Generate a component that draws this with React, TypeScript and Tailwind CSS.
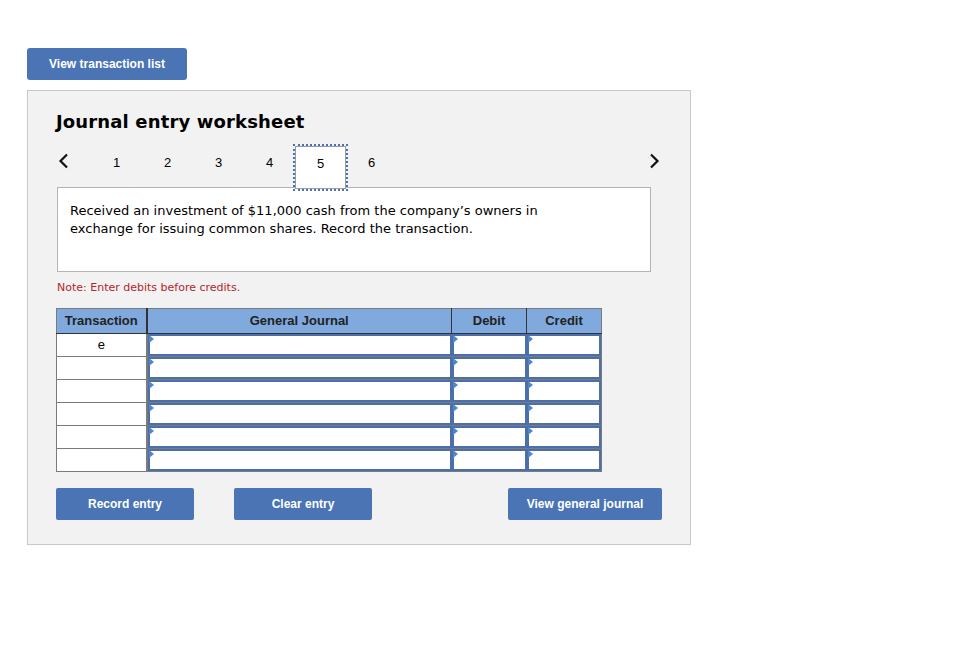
import { useState } from "react";

const rows = ["e", "", "", "", "", ""];
const pages = [1, 2, 3, 4, 5, 6];

function Chevron({ dir }: { dir: "left" | "right" }) {
  return (
    <svg width="12" height="16" viewBox="0 0 12 16" className="block">
      <path
        d={dir === "left" ? "M9 1.5 L2.5 8 L9 14.5" : "M3 1.5 L9.5 8 L3 14.5"}
        fill="none"
        stroke="#111"
        strokeWidth="2.2"
      />
    </svg>
  );
}

function InputCell() {
  return (
    <div className="relative h-[22px] border-2 border-[#4a6fab] bg-white">
      <span className="absolute -left-px -top-px h-0 w-0 border-y-[4px] border-l-[5px] border-y-transparent border-l-[#4f86cf]" />
    </div>
  );
}

export default function App() {
  const [active, setActive] = useState(5);

  return (
    <div className="min-h-[650px] bg-white pl-[27px] pt-[48px] font-['Liberation_Sans',Arial,sans-serif] text-black">
      {/* Top action */}
      <button className="h-8 w-40 rounded-[3px] bg-[#4a74b3] text-[12px] font-bold text-white">
        View transaction list
      </button>

      {/* Worksheet panel */}
      <div className="mt-[10px] w-[664px] border border-[#c8c8c8] bg-[#f2f2f2] pl-[28px] pr-[28px] pt-[20px] pb-[24px]">
        <h2 className="font-['DejaVu_Sans',Verdana,sans-serif] text-[18px] font-bold leading-[22px] tracking-[0.15px]">
          Journal entry worksheet
        </h2>

        {/* Pager */}
        <div className="mt-[13px] flex h-[41px] items-start">
          <button className="mt-[7px] flex w-[35px] pl-[2px]">
            <Chevron dir="left" />
          </button>
          {pages.map((p) => (
            <button
              key={p}
              onClick={() => setActive(p)}
              className={
                p === active
                  ? "relative z-10 flex h-[43px] w-[51px] items-start justify-center border border-[#9a9a9a] bg-white pt-[7px] text-[13px] outline-2 outline-dotted outline-[#4a72b8]"
                  : "flex h-[43px] w-[51px] items-start justify-center pt-[7px] text-[13px]"
              }
            >
              {p}
            </button>
          ))}
          <button className="ml-auto mt-[7px] mr-[2px] flex">
            <Chevron dir="right" />
          </button>
        </div>

        {/* Description */}
        <div className="ml-px h-[85px] w-[594px] border border-[#b4b4b4] bg-white px-[12px] pt-[14px] font-['DejaVu_Sans',Verdana,sans-serif] text-[13px] leading-[18px]">
          Received an investment of $11,000 cash from the company’s owners in
          <br />
          exchange for issuing common shares. Record the transaction.
        </div>

        <p className="ml-px mt-[9px] font-['DejaVu_Sans',Verdana,sans-serif] text-[11px] leading-[14px] text-[#b1262a]">
          Note: Enter debits before credits.
        </p>

        {/* Journal table */}
        <table className="mt-[13px] w-[545px] table-fixed border-collapse border border-[#7b7b7b] text-[13px]">
          <colgroup>
            <col className="w-[90px]" />
            <col className="w-[305px]" />
            <col className="w-[75px]" />
            <col className="w-[75px]" />
          </colgroup>
          <thead>
            <tr className="h-[25px] bg-[#80a9de] font-bold text-[#222]">
              <th className="border-r-2 border-b border-[#333] font-bold">Transaction</th>
              <th className="border-r border-b border-[#333] font-bold">General Journal</th>
              <th className="border-r border-b border-[#333] font-bold">Debit</th>
              <th className="border-b border-[#333] font-bold">Credit</th>
            </tr>
          </thead>
          <tbody>
            {rows.map((t, i) => (
              <tr key={i} className="h-[23px]">
                <td className="border-r-2 border-b border-[#7b7b7b] bg-white p-0 pt-px text-center align-top leading-[20px]">
                  {t}
                </td>
                <td className="border-b border-[#7b7b7b] p-0 align-top">
                  <InputCell />
                </td>
                <td className="border-b border-[#7b7b7b] p-0 align-top">
                  <InputCell />
                </td>
                <td className="border-b border-[#7b7b7b] p-0 align-top">
                  <InputCell />
                </td>
              </tr>
            ))}
          </tbody>
        </table>

        {/* Actions */}
        <div className="mt-[16px] flex items-center">
          <button className="h-8 w-[138px] rounded-[2px] bg-[#4a74b3] text-[12px] font-bold text-white">
            Record entry
          </button>
          <button className="ml-10 h-8 w-[138px] rounded-[2px] bg-[#4a74b3] text-[12px] font-bold text-white">
            Clear entry
          </button>
          <button className="ml-auto h-8 w-[154px] rounded-[2px] bg-[#4a74b3] text-[12px] font-bold text-white">
            View general journal
          </button>
        </div>
      </div>
    </div>
  );
}
